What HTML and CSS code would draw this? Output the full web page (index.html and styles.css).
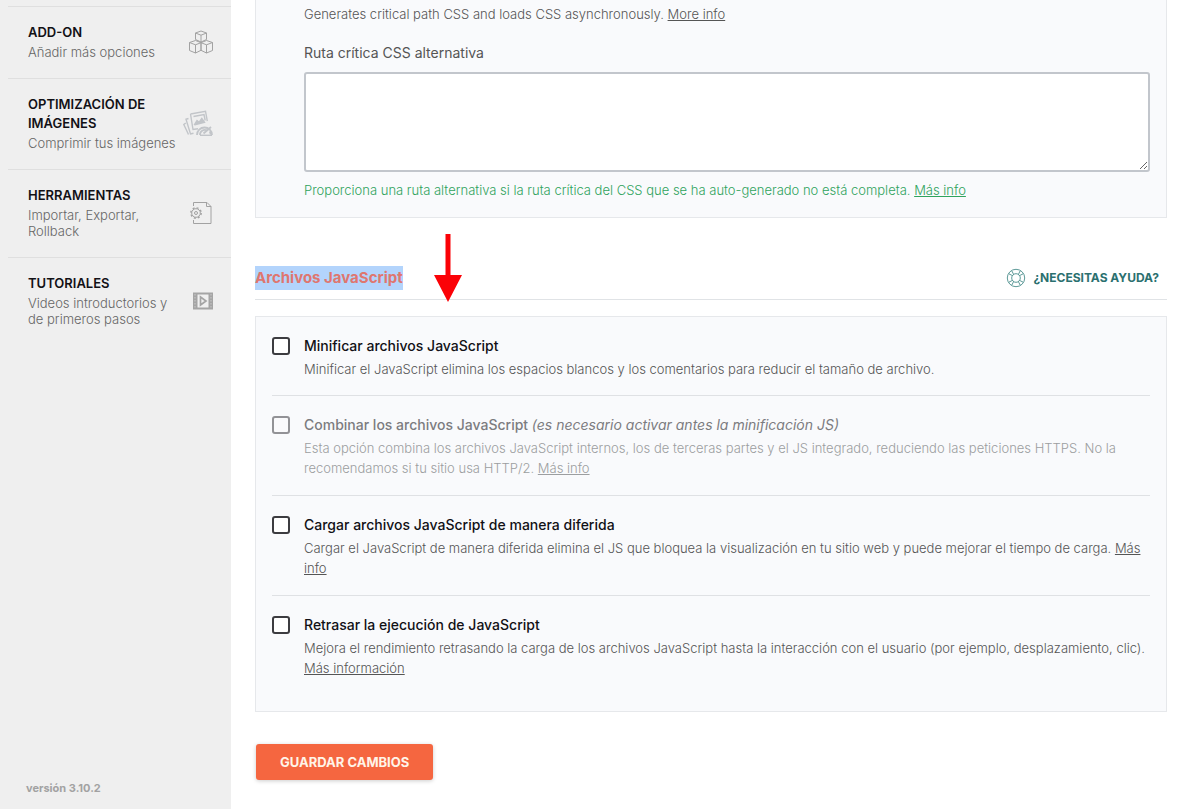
FILE: index.html
```html
<!DOCTYPE html>
<html lang="es">
<head>
<meta charset="utf-8">
<meta name="viewport" content="width=device-width, initial-scale=1">
<title>Optimizar archivos</title>
<link rel="stylesheet" href="styles.css">
</head>
<body>
<div class="layout">
  <aside class="sidebar">
    <nav class="nav">
      <a class="nav-item" href="#addons">
        <span class="nav-text"><span class="nav-title">ADD-ON</span><span class="nav-sub">Añadir más opciones</span></span>
        <svg class="nav-icon" viewBox="0 0 32 32" fill="none" stroke="#a2a2a2" stroke-width="1">
          <path d="M16 5l5.500 2v6.500L16 16l-5.500-2.500V7zM10.500 7l5.500 2.200L21.500 7M16 9.200V16"/>
          <path d="M10.500 14.500L16 16.700v7.600L10.500 27 4.500 24.500v-8zM4.500 16.500l6 2.300 5.500-2.100M10.500 18.800V27"/>
          <path d="M21.500 14.500L27.500 16.500v8L21.500 27 16 24.300v-7.600zM16 16.700l5.500 2.100 6-2.300M21.500 18.800V27"/>
        </svg>
      </a>
      <a class="nav-item" href="#imagenes">
        <span class="nav-text"><span class="nav-title">OPTIMIZACIÓN DE IMÁGENES</span><span class="nav-sub">Comprimir tus imágenes</span></span>
        <svg class="nav-icon" viewBox="2 -1 32 32" overflow="visible" fill="none" stroke="#c2c5c9" stroke-width="1.400">
          <path d="M7.500 6L22.500 3.200l1.800 10M7.500 6L10 21.500l5-.8M10.500 8.500l10.500-2 1.200 6"/>
          <path d="M11.500 16.500l2.500-4 2 1.800 2.800-3.800 2.700 3.800-9.500 2.500z" fill="#c2c5c9"/>
          <path d="M5.500 10.500l-2.500.8L7.500 26l3-.8M2.800 15L.8 16.500 5.500 26.500"/>
          <path d="M14 27a7.500 7.500 0 1 1 15 0M17 27a4.700 4.700 0 0 1 7-4.500M28 19l-7.500 6.500M26.800 23.500l1 3" stroke-width="1.800"/>
          <path d="M17 27.300h12"/>
        </svg>
      </a>
      <a class="nav-item" href="#herramientas">
        <span class="nav-text"><span class="nav-title">HERRAMIENTAS</span><span class="nav-sub">Importar, Exportar, Rollback</span></span>
        <svg class="nav-icon" viewBox="0 0 32 32" fill="none" stroke="#a2a2a2" stroke-width="1">
          <path d="M8.500 9V5.500H22l4 4v17H8.500V23M21.500 5.500V9.500H26"/>
          <circle cx="11" cy="16" r="4.300"/><circle cx="11" cy="16" r="1.500"/>
          <circle cx="11" cy="16" r="5.200" stroke-dasharray="2 2.080" stroke-width="1.400"/>
        </svg>
      </a>
      <a class="nav-item" href="#tutoriales">
        <span class="nav-text"><span class="nav-title">TUTORIALES</span><span class="nav-sub">Videos introductorios y de primeros pasos</span></span>
        <svg class="nav-icon" viewBox="0 0 32 32" fill="none" stroke="#a5a5a5">
          <rect x="8" y="7.500" width="20" height="17" fill="#a5a5a5" stroke="none"/>
          <rect x="12.500" y="9.500" width="11" height="13" fill="#f0f0f0" stroke="none"/>
          <path d="M15.500 12v8l5.500-4z" stroke-width="1.700"/>
          <path d="M10 9v15M26 9v15" stroke="#bdbdbd" stroke-width="1.500" stroke-dasharray="1.500 1.500"/>
        </svg>
      </a>
    </nav>
    <p class="version">versión 3.10.2</p>
  </aside>

  <main class="main">
    <section class="panel panel-css">
      <p class="desc">Generates critical path CSS and loads CSS asynchronously. <a href="#more">More info</a></p>
      <label class="field-label" for="critical-css">Ruta crítica CSS alternativa</label>
      <textarea class="field" id="critical-css"></textarea>
      <p class="desc hint">Proporciona una ruta alternativa si la ruta crítica del CSS que se ha auto-generado no está completa. <a href="#mas">Más info</a></p>
    </section>

    <header class="section-head">
      <h2 class="section-title"><mark class="selected">Archivos JavaScript</mark></h2>
      <a class="help" href="#ayuda">
        <svg class="help-icon" viewBox="0 0 20 20" fill="none" stroke="#5d9a98" stroke-width="1">
          <circle cx="10" cy="10" r="8.700"/><circle cx="10" cy="10" r="4.300"/>
          <path d="M2.600 5.700l4 2M5.700 2.600l2 4M17.400 5.700l-4 2M14.300 2.600l-2 4M2.600 14.300l4-2M5.700 17.400l2-4M17.400 14.300l-4-2M14.300 17.400l-2-4"/>
        </svg>
        ¿NECESITAS AYUDA?
      </a>
      <svg class="arrow" viewBox="0 0 28 68"><path d="M11.500 0h5v41H28L14 68 0 41h11.500z" fill="#fb0207"/></svg>
    </header>

    <section class="panel panel-js">
      <div class="option">
        <input class="check" type="checkbox" id="minify">
        <div class="option-body">
          <label class="option-title" for="minify">Minificar archivos JavaScript</label>
          <p class="desc">Minificar el JavaScript elimina los espacios blancos y los comentarios para reducir el tamaño de archivo.</p>
        </div>
      </div>
      <div class="option is-disabled">
        <input class="check" type="checkbox" id="combine" disabled>
        <div class="option-body">
          <label class="option-title" for="combine">Combinar los archivos JavaScript <em>(es necesario activar antes la minificación JS)</em></label>
          <p class="desc">Esta opción combina los archivos JavaScript internos, los de terceras partes y el JS integrado, reduciendo las peticiones HTTPS. No la recomendamos si tu sitio usa HTTP/2. <a href="#mas">Más info</a></p>
        </div>
      </div>
      <div class="option">
        <input class="check" type="checkbox" id="defer">
        <div class="option-body">
          <label class="option-title" for="defer">Cargar archivos JavaScript de manera diferida</label>
          <p class="desc">Cargar el JavaScript de manera diferida elimina el JS que bloquea la visualización en tu sitio web y puede mejorar el tiempo de carga. <a href="#mas">Más info</a></p>
        </div>
      </div>
      <div class="option">
        <input class="check" type="checkbox" id="delay">
        <div class="option-body">
          <label class="option-title" for="delay">Retrasar la ejecución de JavaScript</label>
          <p class="desc">Mejora el rendimiento retrasando la carga de los archivos JavaScript hasta la interacción con el usuario (por ejemplo, desplazamiento, clic). <a href="#mas">Más información</a></p>
        </div>
      </div>
    </section>

    <button class="save" type="submit">GUARDAR CAMBIOS</button>
  </main>
</div>
</body>
</html>
```
FILE: styles.css
```css
* { box-sizing: border-box; }

body {
  margin: 0;
  background: #fff;
  color: #555;
  font: 300 13px/20px Inter, "Liberation Sans", sans-serif;
}

p, h2 { margin: 0; }

.layout {
  display: flex;
  min-height: 100vh;
}

.sidebar {
  display: flex;
  flex-direction: column;
  justify-content: space-between;
  flex: 0 0 231px;
  padding: 6px 0 11px 8px;
  background: #efefef;
}

.nav-item {
  display: flex;
  align-items: center;
  justify-content: space-between;
  padding: 16px 14px 18px 20px;
  border-top: 1px solid #dfdfdf;
  color: #666;
  text-decoration: none;
}

.nav-text {
  flex: 0 0 150px;
}

.nav-title {
  display: block;
  margin-bottom: 2px;
  color: #121116;
  font-weight: 600;
  line-height: 19px;
}

.nav-sub {
  display: block;
  line-height: 16px;
}

.nav-icon {
  flex: none;
  width: 32px;
  height: 32px;
}

.version {
  padding-left: 18px;
  color: #a2a2a2;
  font-size: 11px;
  font-weight: 700;
}

.main {
  flex: 1;
  min-width: 0;
  padding: 0 15px 29px 24px;
}

.panel {
  border: 1px solid #e6e8eb;
  background: #f9fafc;
}

.panel-css {
  display: flex;
  flex-direction: column;
  padding: 4px 16px 17px 48px;
  border-top: 0;
}

.desc a { color: inherit; }

.field-label {
  margin-top: 19px;
  color: #555;
  font-size: 14px;
  font-weight: 400;
}

.field {
  height: 100px;
  margin: 9px 0 8px;
  border: 2px solid #c2c6cc;
  border-radius: 3px;
  background: #fff;
  resize: vertical;
}

.hint { color: #2fa35c; }

.section-head {
  position: relative;
  display: flex;
  align-items: center;
  justify-content: space-between;
  margin: 44px 0 16px;
  padding: 4px 8px 9px 0;
  border-bottom: 1px solid #e0e3e6;
}

.section-title {
  font-size: 15px;
  font-weight: 700;
  line-height: 24px;
}

.selected {
  display: inline-block;
  background: #b3d4fc;
  color: #df766f;
}

.help {
  display: flex;
  align-items: center;
  gap: 7px;
  color: #2b706f;
  font-size: 12px;
  font-weight: 700;
  text-decoration: none;
}

.help-icon {
  width: 20px;
  height: 20px;
}

.arrow {
  position: absolute;
  top: -28px;
  left: 179px;
  width: 28px;
  height: 68px;
}

.panel-js { padding: 19px 16px 33px; }

.option {
  display: flex;
  gap: 14px;
  padding-bottom: 17px;
  border-bottom: 1px solid #dfe1e4;
}

.option + .option { padding-top: 19px; }

.option:first-child { padding-bottom: 16px; }

.option:last-child {
  padding-bottom: 0;
  border-bottom: 0;
}

.check {
  flex: none;
  width: 18px;
  height: 18px;
  margin: 1px 0;
  appearance: none;
  border: 2px solid #3c3c40;
  border-radius: 3px;
  background: #fff;
}

.option-title {
  display: block;
  margin-bottom: 3px;
  color: #121116;
  font-size: 14px;
  font-weight: 500;
}

.option-title em { font-weight: 400; }

.is-disabled .check { border-color: #929296; background: #fafafc; }
.is-disabled .option-title { color: #7c7c80; }
.is-disabled .desc { color: #9c9ea0; }

.save {
  height: 36px;
  margin: 32px 0 0 1px;
  padding: 0 24px;
  border: 0;
  border-radius: 3px;
  background: #f56640;
  box-shadow: 0 1px 4px #0003;
  color: #fff4e8;
  font: 700 13px/20px Inter, "Liberation Sans", sans-serif;
}
```
